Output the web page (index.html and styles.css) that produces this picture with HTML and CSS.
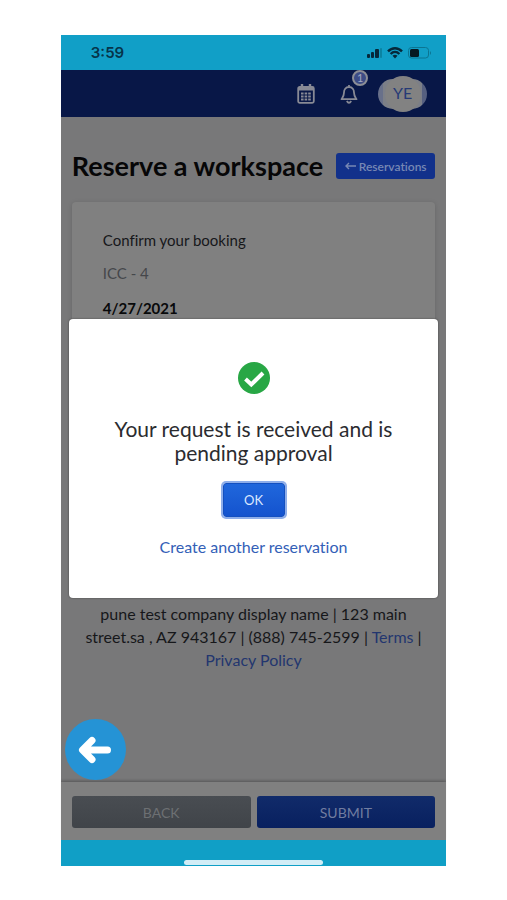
FILE: index.html
```html
<!DOCTYPE html>
<html lang="en">
<head>
<meta charset="utf-8">
<meta name="viewport" content="width=device-width, initial-scale=1">
<title>Reserve a workspace</title>
<link rel="stylesheet" href="styles.css">
</head>
<body>
<div class="phone">
  <div class="status">
    <span class="clock">3:59</span>
    <svg class="status-icons" width="66" height="14" viewBox="0 0 66 14" aria-hidden="true">
      <g fill="#06283a"><rect x="0" y="8" width="3" height="4" rx="1"/><rect x="4" y="6" width="3" height="6" rx="1"/><rect x="8" y="3" width="4" height="9" rx="1"/></g>
      <rect x="13" y="2" width="2" height="10" rx="1" fill="#0b83a2"/>
      <g fill="none" stroke="#06283a" stroke-width="2.400"><path d="M21 5.400C25 1.200 31 1.200 35 5.400"/><path d="M23.600 8C26.300 5.200 29.700 5.200 32.400 8"/></g>
      <path d="M25.500 9.800Q28 7.800 30.500 9.800L28 12.500Z" fill="#06283a"/>
      <rect x="41.500" y="1.500" width="20" height="10.500" rx="3" fill="none" stroke="#0b7592"/>
      <rect x="43" y="3" width="9" height="8" rx="1.500" fill="#051923"/>
      <path d="M63 5Q65 7 63 9Z" fill="#0b7592"/>
    </svg>
  </div>
  <div class="screen">
    <header class="nav">
      <button class="icon-button" aria-label="Calendar">
        <svg width="18" height="20" viewBox="0 0 18 20"><path d="M5 0V4M13 0V4" stroke="#888a95" stroke-width="2.400"/><rect x="1.200" y="3" width="15.600" height="15.800" rx="1.500" fill="none" stroke="#888a95" stroke-width="1.800"/><path d="M1 5H17" stroke="#888a95" stroke-width="3"/><path d="M4 9.500H14M4 12.500H14M4 15.500H14" stroke="#888a95" stroke-width="2" stroke-dasharray="2.600 1"/></svg>
      </button>
      <button class="icon-button bell" aria-label="Notifications">
        <svg width="18" height="20" viewBox="0 0 18 20" fill="none" stroke="#888a95" stroke-width="1.800" stroke-linejoin="round"><path d="M9 1V3M9 3C5.500 3 4 5.800 4 8.500C4 12 2.800 13.200 1.500 15.200H16.500C15.200 13.200 14 12 14 8.500C14 5.800 12.500 3 9 3Z"/><path d="M6.800 17Q9 20.500 11.200 17"/></svg>
        <span class="badge">1</span>
      </button>
      <button class="avatar" aria-label="Account"><span class="initials">YE</span></button>
    </header>
    <main class="content">
      <div class="title-row">
        <h1>Reserve a workspace</h1>
        <a class="reservations" href="#"><svg width="11" height="8" viewBox="0 0 11 8" fill="none" stroke="#7788b4" stroke-width="1.400"><path d="M11 4H1M4 1L1 4L4 7"/></svg>Reservations</a>
      </div>
      <section class="card">
        <p>Confirm your booking</p>
        <p class="muted">ICC - 4</p>
        <p class="date">4/27/2021</p>
      </section>
      <footer class="company">pune test company display name | 123 main street.sa , AZ 943167 | (888) 745-2599 | <a href="#">Terms</a> | <a href="#">Privacy Policy</a></footer>
    </main>
    <div class="actions">
      <button class="back">BACK</button>
      <button class="submit">SUBMIT</button>
    </div>
    <button class="fab" aria-label="Go back">
      <svg width="34" height="28" viewBox="0 0 34 28" fill="none" stroke="#fff" stroke-width="7" stroke-linecap="round" stroke-linejoin="round"><path d="M29.500 14H5M14 4.500L4.500 14L14 23.500"/></svg>
    </button>
    <div class="modal" role="dialog" aria-modal="true" aria-labelledby="message">
      <svg width="32" height="32" viewBox="0 0 32 32" aria-hidden="true"><circle cx="16" cy="16" r="16" fill="#28a745"/><path d="M7.500 17L13.300 22.500L25 11" fill="none" stroke="#fff" stroke-width="4"/></svg>
      <h2 id="message">Your request is received and is pending approval</h2>
      <button class="ok">OK</button>
      <a class="another" href="#">Create another reservation</a>
    </div>
  </div>
  <div class="home"><span class="home-bar"></span></div>
</div>
</body>
</html>
```
FILE: styles.css
```css
* { box-sizing: border-box; }
body {
  margin: 0;
  padding: 35px 12%;
  background: #fff;
  font-family: Lato, "Open Sans", sans-serif;
  font-size: 15px;
  font-variant-ligatures: none;
  color: #16171a;
}
button { font: inherit; border: 0; padding: 0; cursor: pointer; }
a { color: #23366f; text-decoration: none; }
h1, h2, p { margin: 0; }
.phone { display: flex; flex-direction: column; }
.status {
  display: flex;
  align-items: center;
  justify-content: space-between;
  height: 35px;
  padding: 0 13px 0 30px;
  background: #119fc7;
}
.clock { font: 600 15px Inter, sans-serif; color: #06344a; }
.screen {
  position: relative;
  display: flex;
  flex-direction: column;
  min-height: 770px;
  background: #787879;
}
.nav {
  display: flex;
  align-items: center;
  justify-content: flex-end;
  height: 47px;
  padding-right: 19px;
  background: #081747;
}
.icon-button { display: flex; background: none; margin-right: 25px; }
.bell { position: relative; margin-right: 20px; }
.badge {
  position: absolute;
  top: -14px;
  right: -10px;
  width: 16px;
  height: 16px;
  border: 2px solid #8c8e96;
  border-radius: 50%;
  background: #3c4c86;
  color: #a3aac4;
  font-size: 11px;
  line-height: 12px;
}
.avatar {
  display: flex;
  justify-content: center;
  align-items: center;
  width: 49px;
  height: 30px;
  border-radius: 15px;
  background: linear-gradient(90deg, #68708a 0 5px, #7c7f87 5px 44px, #566080 44px);
}
.initials {
  width: 36px;
  height: 36px;
  border-radius: 50%;
  background: #828282;
  color: #263a76;
  font-size: 16px;
  line-height: 34px;
}
.content { flex: 1; padding: 35px 11px 0; }
.title-row { display: flex; align-items: center; justify-content: space-between; height: 28px; }
h1 { font-size: 27px; font-weight: 700; line-height: 28px; color: #060607; white-space: nowrap; }
.reservations {
  display: flex;
  align-items: center;
  justify-content: center;
  gap: 3px;
  width: 99px;
  height: 26px;
  border-radius: 3px;
  background: #12318b;
  color: #7788b4;
  font-size: 12px;
  font-weight: 600;
}
.card {
  height: 375px;
  margin: 22px 0 25px;
  padding: 28px 31px;
  border-radius: 4px;
  background: #808080;
  box-shadow: 0 1px 5px rgba(0, 0, 0, .15);
  line-height: 20px;
}
.card .muted { margin: 13px 0 15px; color: #45474b; }
.card .date { font-weight: 700; color: #08090a; }
.company { padding: 0 8px; text-align: center; line-height: 23px; font-size: 16px; }
.actions {
  display: grid;
  grid-template-columns: 1fr 1fr;
  gap: 6px;
  padding: 14px 11px 12px;
  background: #808080;
  box-shadow: 0 -1px 3px rgba(0, 0, 0, .3);
  clip-path: inset(-4px 0 0);
}
.actions button { height: 32px; border-radius: 3px; font-size: 14px; }
.back { background: linear-gradient(#494d52, #404449); color: #6d7073; }
.submit { background: linear-gradient(#112b6a, #08205f); color: #717da0; }
.fab {
  position: absolute;
  left: 4px;
  bottom: 60px;
  display: flex;
  align-items: center;
  justify-content: center;
  width: 61px;
  height: 61px;
  border-radius: 50%;
  background: #2593d5;
}
.modal {
  position: absolute;
  top: 249px;
  left: 8px;
  right: 8px;
  display: flex;
  flex-direction: column;
  align-items: center;
  height: 279px;
  padding: 43px 32px 0;
  border-radius: 4px;
  background: #fff;
  box-shadow: 0 0 2px rgba(0, 0, 0, .5);
}
h2 {
  margin: 23px 0 18px;
  font-size: 21px;
  font-weight: 400;
  line-height: 24px;
  text-align: center;
  color: #2b2c30;
}
.ok {
  width: 62px;
  height: 34px;
  border: 1px solid #1450c0;
  border-radius: 3px;
  background: linear-gradient(#2067dc, #1453ce);
  box-shadow: 0 0 0 2px #8eaeea;
  color: #dce8ff;
  font-size: 13px;
}
.another { margin-top: 20px; line-height: 20px; font-size: 16px; color: #3360b7; }
.home { display: flex; justify-content: center; align-items: flex-end; height: 26px; padding-bottom: 1px; background: #109fc6; }
.home-bar { width: 36%; height: 5px; border-radius: 3px; background: #d2edf6; }
```
